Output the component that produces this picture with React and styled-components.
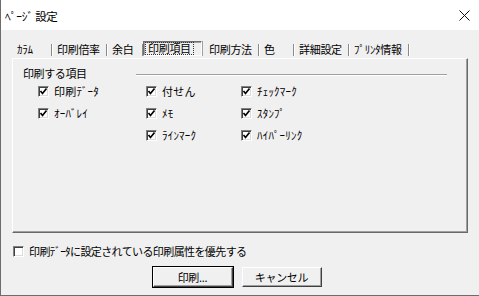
import styled, { createGlobalStyle } from 'styled-components';

const GlobalStyle = createGlobalStyle`
    html, body {
        margin: 0;
        padding: 0;
        background: #f0f0f0;
    }
    body {
        font-family: "Noto Sans CJK JP", "Noto Sans", sans-serif;
        font-size: 11px;
        color: #000;
    }
`

const tabs = [
    { label: 'ｶﾗﾑ', width: 40 },
    { label: '印刷倍率', width: 55 },
    { label: '余白', width: 36 },
    { label: '印刷項目', width: 59, selected: true },
    { label: '印刷方法', width: 55 },
    { label: '色', width: 35 },
    { label: '詳細設定', width: 55 },
    { label: 'ﾌﾟﾘﾝﾀ情報', width: 60 },
];

const items = [
    ['印刷ﾃﾞｰﾀ', '付せん', 'ﾁｪｯｸﾏｰｸ'],
    ['ｵｰﾊﾞﾚｲ', 'ﾒﾓ', 'ｽﾀﾝﾌﾟ'],
    [null, 'ﾗｲﾝﾏｰｸ', 'ﾊｲﾊﾟｰﾘﾝｸ'],
];

function CheckBox({ checked }) {
    return (
        <Box>
            {checked && (
                <svg width="9" height="9" viewBox="0 0 9 9">
                    <path d="M1.5 4 L3.5 6.5 L7.5 1.5" fill="none" stroke="#000" strokeWidth="1.7" />
                </svg>
            )}
        </Box>
    );
}

export default function App() {
    return (
        <Window>
            <GlobalStyle />
            <TitleBar>
                <span>ﾍﾟｰｼﾞ 設定</span>
                <svg width="11" height="11" viewBox="0 0 11 11">
                    <path d="M0.5 0.5 L10.5 10.5 M10.5 0.5 L0.5 10.5" stroke="#111" strokeWidth="1" />
                </svg>
            </TitleBar>
            <Body>
                <TabStrip>
                    {tabs.map((t) => (
                        <Tab key={t.label} $width={t.width} $selected={t.selected}>
                            {t.selected ? <Focus>{t.label}</Focus> : t.label}
                        </Tab>
                    ))}
                </TabStrip>
                <Panel>
                    <GroupHeader>
                        <span>印刷する項目</span>
                        <Rule />
                    </GroupHeader>
                    <Grid>
                        {items.flat().map((label, i) =>
                            label ? (
                                <Option key={i}>
                                    <CheckBox checked />
                                    <span>{label}</span>
                                </Option>
                            ) : (
                                <span key={i} />
                            )
                        )}
                    </Grid>
                </Panel>
                <BottomOption>
                    <CheckBox />
                    <span>印刷ﾃﾞｰﾀに設定されている印刷属性を優先する</span>
                </BottomOption>
                <Buttons>
                    <Button $default>印刷...</Button>
                    <Button>キャンセル</Button>
                </Buttons>
            </Body>
        </Window>
    );
}

const Window = styled.div`
    width: 479px;
    height: 296px;
    box-sizing: border-box;
    border-left: 1px solid #6d6d6d;
    border-bottom: 1px solid #6d6d6d;
    background: #f0f0f0;
    display: flex;
    flex-direction: column;
    overflow: hidden;
`

const TitleBar = styled.div`
    height: 29px;
    background: #fff;
    display: flex;
    align-items: center;
    justify-content: space-between;
    padding: 1px 9px 0 4px;
    font-size: 11.5px;
    letter-spacing: -0.3px;
    svg { margin-top: -1px; }
`

const Body = styled.div`
    flex: 1;
    display: flex;
    flex-direction: column;
    padding: 11px 11px 0 11px;
`

const TabStrip = styled.div`
    display: flex;
    height: 17px;
    align-items: flex-start;
`

const Tab = styled.div`
    width: ${(p) => p.$width}px;
    height: ${(p) => (p.$selected ? 15 : 17)}px;
    box-sizing: border-box;
    display: flex;
    align-items: center;
    padding-left: ${(p) => (p.$selected ? 2 : 5)}px;
    padding-bottom: ${(p) => (p.$selected ? 0 : 2)}px;
    letter-spacing: -0.3px;
    white-space: nowrap;
    position: relative;
    ${(p) => p.$selected
        ? `
        border-top: 1px solid #6d6d6d;
        border-left: 1px solid #6d6d6d;
        border-right: 1px solid #fff;
        border-bottom: 1px solid #fff;
        box-shadow: 1px 0 0 #a0a0a0, inset 1px 1px 0 #a0a0a0;
        margin-right: 2px;
    `
        : `
        &::after {
            content: '';
            position: absolute;
            right: 0;
            top: 3px;
            width: 1px;
            height: 12px;
            background: #8a8a8a;
            box-shadow: 1px 0 0 #fff;
        }
    `}
`

const Focus = styled.span`
    outline: 1px dotted #333;
    outline-offset: 0;
    padding: 0 2px;
    line-height: 11px;
`

const Panel = styled.div`
    height: 175px;
    box-sizing: border-box;
    border-top: 1px solid #fff;
    border-left: 1px solid #fff;
    border-right: 1px solid #696969;
    border-bottom: 1px solid #696969;
    box-shadow: inset -1px -1px 0 #a0a0a0;
    padding: 7px 20px 0 10px;
    display: flex;
    flex-direction: column;
`

const GroupHeader = styled.div`
    display: flex;
    align-items: center;
    height: 14px;
    letter-spacing: -0.4px;
    span { width: 113px; }
`

const Rule = styled.div`
    flex: 1;
    height: 1px;
    background: #a0a0a0;
    box-shadow: 0 1px 0 #fff;
    margin-top: 2px;
`

const Grid = styled.div`
    display: grid;
    grid-template-columns: 108px 95px 1fr;
    grid-auto-rows: 22px;
    padding: 0 0 0 15px;
`

const Option = styled.div`
    display: flex;
    align-items: center;
    gap: 5px;
    letter-spacing: 0.2px;
`

const Box = styled.div`
    width: 11px;
    height: 11px;
    box-sizing: border-box;
    border-top: 1px solid #808080;
    border-left: 1px solid #808080;
    border-right: 1px solid #fff;
    border-bottom: 1px solid #fff;
    box-shadow: inset 1px 1px 0 #404040, inset -1px -1px 0 #dcdcdc;
    background: #fff;
    display: flex;
    align-items: center;
    justify-content: center;
    flex-shrink: 0;
`

const BottomOption = styled.div`
    display: flex;
    align-items: center;
    gap: 5px;
    margin-top: 11px;
    height: 14px;
    padding-left: 1px;
    letter-spacing: -0.6px;
`

const Buttons = styled.div`
    display: flex;
    justify-content: center;
    gap: 9px;
    margin-top: 9px;
    padding-right: 6px;
`

const Button = styled.div`
    width: 80px;
    height: 20px;
    box-sizing: border-box;
    display: flex;
    align-items: center;
    justify-content: center;
    background: #f0f0f0;
    border-top: 1px solid #fff;
    border-left: 1px solid #fff;
    border-right: 1px solid #404040;
    border-bottom: 1px solid #404040;
    box-shadow: inset -1px -1px 0 #a0a0a0;
    outline: ${(p) => (p.$default ? '1px solid #000' : 'none')};
    letter-spacing: -0.3px;
`
